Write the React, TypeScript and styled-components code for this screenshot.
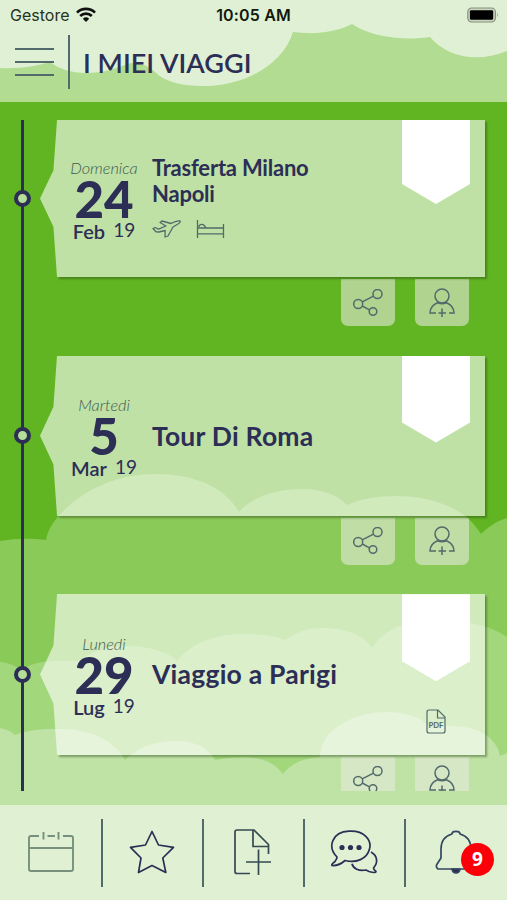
import React from 'react';
import styled, { createGlobalStyle } from 'styled-components';

const ink = '#2c2e55';
const slate = '#526a6b';

const GlobalStyle = createGlobalStyle`
  *, *::before, *::after { box-sizing: border-box; }
  body { margin: 0; background: #62b522; }
`;

const Screen = styled.div`
  position: relative;
  isolation: isolate;
  width: 507px;
  height: 900px;
  overflow: hidden;
  display: flex;
  flex-direction: column;
  background: #62b522;
  color: ${ink};
  font-family: Lato, 'Liberation Sans', sans-serif;
`;

const Backdrop = styled.svg`
  position: absolute;
  inset: 0;
  z-index: -1;
`;

const Header = styled.header`
  flex: none;
  height: 102px;
  display: flex;
  flex-direction: column;
`;

const StatusBar = styled.div`
  height: 30px;
  display: grid;
  grid-template-columns: 1fr auto 1fr;
  align-items: center;
  padding: 0 8px 0 10px;
  font: 400 16px/30px Inter, sans-serif;
  color: #26331f;
`;

const Carrier = styled.div`
  display: flex;
  align-items: center;
  gap: 7px;
  letter-spacing: 0;
`;

const Clock = styled.div`
  margin-left: -2px;
  font-weight: 600;
  color: #111a0c;
  letter-spacing: 0.15px;
`;

const Battery = styled.svg`
  justify-self: end;
`;

const TitleBar = styled.div`
  height: 63px;
  display: flex;
  align-items: center;
  padding-left: 15px;
`;

const MenuButton = styled.div`
  width: 39px;
  height: 28px;
  display: flex;
  flex-direction: column;
  justify-content: space-between;
`;

const MenuLine = styled.span`
  height: 2px;
  background: ${slate};
`;

const TitleRule = styled.span`
  width: 2px;
  height: 54px;
  margin: 0 13px 0 14px;
  background: ${slate};
`;

const PageTitle = styled.h1`
  margin: 2px 0 0;
  font-size: 27px;
  line-height: 32px;
  font-weight: 600;
  letter-spacing: 0.03px;
`;

const TripList = styled.main`
  flex: none;
  height: 671px;
  margin: 18px 0 14px;
  overflow: hidden;
  display: flex;
  flex-direction: column;
  background: linear-gradient(${ink}, ${ink}) 21px 0 / 3px 100% no-repeat;
`;

const TripRow = styled.section<{ $height: number }>`
  flex: none;
  height: ${(p) => p.$height}px;
  display: grid;
  grid-template-columns: 57px 428px;
  grid-template-rows: auto 1fr;
`;

const TimelineCell = styled.div`
  display: flex;
  align-items: center;
  padding-left: 14px;
`;

const Node = styled.span`
  width: 17px;
  height: 17px;
  border: 4px solid ${ink};
  border-radius: 50%;
  background: #b6de98;
`;

const Card = styled.article<{ $height: number }>`
  position: relative;
  height: ${(p) => p.$height}px;
  display: grid;
  grid-template-columns: 95px 1fr 68px;
  column-gap: 0;
  padding-right: 15px;
  background: rgba(255, 255, 255, 0.6);
  box-shadow: 2px 2px 2px rgba(38, 60, 22, 0.42);

  &::before {
    content: '';
    position: absolute;
    left: -17px;
    top: 0;
    width: 17px;
    height: 100%;
    background: rgba(255, 255, 255, 0.6);
    clip-path: polygon(100% 0, 79% 32%, 0 50%, 79% 68%, 100% 100%);
  }
`;

const DateBlock = styled.div`
  width: 94px;
  display: flex;
  flex-direction: column;
  align-items: center;
  align-self: center;
  padding-top: 3px;
`;

const Weekday = styled.div`
  font-size: 16.3px;
  line-height: 18px;
  font-style: italic;
  font-weight: 300;
  color: #3d5b50;
`;

const DayNumber = styled.div`
  font-size: 51px;
  line-height: 44px;
  font-weight: 900;
`;

const MonthYear = styled.div`
  display: flex;
  gap: 8px;
  font-size: 20px;
  line-height: 20px;
  font-weight: 600;
`;

const Year = styled.span`
  font-size: 19px;
  line-height: 18px;
  font-weight: 400;
`;

const Details = styled.div`
  align-self: center;
  display: flex;
  flex-direction: column;
`;

const TripTitle = styled.h2<{ $compact?: boolean }>`
  margin: ${(p) => (p.$compact ? '-3px' : 0)} 0 0;
  max-width: 200px;
  font-size: ${(p) => (p.$compact ? 22 : 26.5)}px;
  line-height: ${(p) => (p.$compact ? 26 : 32)}px;
  font-weight: 700;
  letter-spacing: ${(p) => (p.$compact ? -0.22 : 0.22)}px;
`;

const Amenities = styled.div`
  display: flex;
  gap: 14px;
  height: 20px;
  margin-top: 12px;
`;

const Extras = styled.div`
  display: flex;
  flex-direction: column;
  align-items: center;
  justify-content: space-between;
  padding-bottom: 21px;
`;

const Ribbon = styled.div<{ $height: number }>`
  width: 68px;
  height: ${(p) => p.$height}px;
  background: #fff;
  clip-path: polygon(0 0, 100% 0, 100% calc(100% - 20px), 50% 100%, 0 calc(100% - 20px));
`;

const Actions = styled.div`
  grid-column: 2;
  display: flex;
  justify-content: flex-end;
  gap: 20px;
  padding: 2px 16px 0 0;
`;

const ActionTab = styled.div`
  width: 54px;
  height: 47px;
  display: flex;
  align-items: center;
  justify-content: center;
  border-radius: 0 0 7px 7px;
  background: rgba(228, 233, 219, 0.6);
`;

const BottomNav = styled.nav`
  flex: none;
  height: 95px;
  display: grid;
  grid-template-columns: 101px repeat(3, 101px) 103px;
  align-items: center;
  background: rgba(255, 255, 255, 0.51);
`;

const NavItem = styled.div<{ $last?: boolean }>`
  position: relative;
  height: 68px;
  display: flex;
  align-items: center;
  justify-content: center;
  padding: 0 0 2px ${(p) => (p.$last ? 1 : 0)}px;
  box-shadow: ${(p) => (p.$last ? 'none' : `2px 0 0 ${slate}`)};
`;

const Badge = styled.span`
  position: absolute;
  left: 57px;
  top: 24px;
  width: 33px;
  height: 33px;
  border-radius: 50%;
  background: #fb0009;
  color: #fff;
  font: 700 19px/32px 'Open Sans', sans-serif;
  text-align: center;
`;

const Clouds = () => (
  <Backdrop width="507" height="900" viewBox="0 0 507 900" aria-hidden="true">
    <rect width="507" height="102" fill="#e0f0d5" />
    <path
      fill="#b1dc91"
      d="M0 68C20 69 36 66 50 62C59 69 72 73 85 73C105 73 116 68 131 63Q147 63 155 72C165 82 182 86 203 86C244 86 283 65 293 32C315 35 337 32 352 24C372 37 403 41 430 37C446 56 476 64 507 51V102H0Z"
    />
    <path
      fill="#8aca58"
      d="M0 541Q23 537 46 540C48 530 52 524 57 518C78 493 113 474 155 474C194 474 225 487 239 512C252 497 276 489 302 489C322 489 338 495 347 505C360 499 378 496 396 496C434 496 466 509 481 534Q493 522 507 518V900H0Z"
    />
    <path
      fill="#a3d77c"
      d="M0 662Q13 663 20 670Q37 660 58 661L80 661C91 651 107 646 125 646C149 646 169 652 177 661C191 643 216 634 242 634C260 634 276 636 285 640C296 632 308 628 322 628C344 628 363 634 372 648C382 632 401 621 430 621C461 619 490 625 507 637V900H0Z"
    />
    <path
      fill="#bee3a4"
      d="M0 728Q10 730 15 735C31 729 44 729 60 729C91 729 115 741 125 760C137 748 153 741 175 741C196 741 208 748 215 760C250 754 270 757 283 774C290 764 303 758 320 757C320 731 351 712 387 712C407 712 421 717 431 728C468 721 496 733 500 756L507 753V900H0Z"
    />
  </Backdrop>
);

const WifiIcon = () => (
  <svg width="20" height="16" viewBox="0 0 20 16" fill="none" stroke="#111" strokeWidth="2.7">
    <path d="M1 5.6C6 .7 14 .7 19 5.6M4.2 9C7.5 5.8 12.5 5.8 15.8 9" />
    <path d="M10 15 6.8 11.7Q10 9 13.2 11.7Z" fill="#111" stroke="none" />
  </svg>
);

const BatteryIcon = () => (
  <Battery width="32" height="16" viewBox="0 0 33 16">
    <rect x=".8" y=".8" width="28.5" height="14.4" rx="4" fill="#c8d6bd" stroke="#87927e" strokeWidth="1.2" />
    <rect x="3" y="3" width="24" height="10" rx="1.5" fill="#000" />
    <path d="M31 5.5Q32.5 8 31 10.5Z" fill="#87927e" />
  </Battery>
);

const PlaneIcon = () => (
  <svg width="30" height="20" viewBox="0 0 30 20" fill="none" stroke={slate} strokeWidth="1.3" strokeLinejoin="round">
    <path d="M1 9.5 3 8.5 6.5 10.2 14 7 8 3.5 10 2 19 4.5C22 2.8 25 1.5 28 2Q29 3 26 5L21 8 16 17 13 18 13.2 11.5 7 13 4 12.8Z" />
  </svg>
);

const BedIcon = () => (
  <svg width="29" height="20" viewBox="0 0 29 20" fill="none" stroke={slate} strokeWidth="1.3">
    <path d="M1.5 1V19M27.5 5V19M1.5 9H27.5M1.5 14.8H27.5M3 8C3 5 8 4 9.5 8.5" />
  </svg>
);

const PdfIcon = () => (
  <svg width="20" height="25" viewBox="0 0 20 25" fill="none" stroke={slate} strokeWidth="1.2">
    <path d="M12 1H3Q1 1 1 3V22Q1 24 3 24H17Q19 24 19 22V8Z M11.5 1V9H19" />
    <text x="10" y="19" textAnchor="middle" fill={slate} stroke="none" fontFamily="Lato, sans-serif" fontWeight="700" fontSize="7.6">
      PDF
    </text>
  </svg>
);

const ShareIcon = () => (
  <svg width="30" height="28" viewBox="0 0 30 28" fill="none" stroke={slate} strokeWidth="1.5">
    <circle cx="5.2" cy="15" r="4.5" />
    <circle cx="24.5" cy="5" r="4.5" />
    <circle cx="20" cy="22.5" r="3.8" />
    <path d="M9.2 12.9 20.5 7.1M9.2 17 16.5 20.8" />
  </svg>
);

const AddPersonIcon = () => (
  <svg width="26" height="30" viewBox="0 0 26 30" fill="none" stroke={slate} strokeWidth="1.5">
    <circle cx="13" cy="8" r="7" />
    <path d="M7 25H1Q1 18 8.5 14.8Q13 16.5 17.5 14.8Q25 18 25 25H20M9.5 25H17M13 20.5V29" />
  </svg>
);

const CalendarIcon = () => (
  <svg width="46" height="42" viewBox="0 0 46 42" fill="none" stroke="#78907b" strokeWidth="1.9">
    <path d="M11 5H3Q1 5 1 7V38Q1 40 3 40H43Q45 40 45 38V7Q45 5 43 5H35M19.5 5H27M15.5 1V8.5M30.5 1V8.5M1 17H45" />
  </svg>
);

const StarIcon = () => (
  <svg width="46" height="44" viewBox="0 0 46 44" fill="none" stroke={ink} strokeWidth="1.7" strokeLinejoin="round">
    <path d="M23 1.5 29.5 15 44.5 17.3 33.8 28 36.8 42.5 23 35.5 9.5 42.5 12 28 1.5 17.3 16.5 15Z" />
  </svg>
);

const AddDocumentIcon = () => (
  <svg width="38" height="46" viewBox="0 0 38 46" fill="none" stroke="#344951" strokeWidth="1.7">
    <path d="M16 44.5H3Q1 44.5 1 42.5V3Q1 1 3 1H20L34.5 15.5V25M19 1V17.5H34.5M24.5 20.5V46M12 33H37" />
  </svg>
);

const ChatIcon = () => (
  <svg width="48" height="44" viewBox="0 0 48 44" fill="none" stroke={ink} strokeWidth="1.7" strokeLinejoin="round">
    <path d="M7 27C-3 17 2 2 19 1.2C34 .2 42 10 39.5 19C37 29 26 33.5 15 30.5Q9 36 2 35.5Q1 34.5 5 31.5Q7 29 7 27Z" />
    <path d="M41 22C48 26 48 33 43.5 38Q43.5 39.5 46 41.5Q46 43.5 39 41.5L36 40C29 41.5 23 38.5 22 33.8" />
    <g fill={ink} stroke="none">
      <circle cx="12" cy="17.5" r="2.6" />
      <circle cx="20.5" cy="17.5" r="2.6" />
      <circle cx="29" cy="17.5" r="2.6" />
    </g>
  </svg>
);

const BellIcon = () => (
  <svg width="42" height="44" viewBox="0 0 42 44" fill="none" stroke="#344660" strokeWidth="1.7" strokeLinejoin="round">
    <path d="M17 4C17 .5 25 .5 25 4C32 6 36 11 36 19V28L41 35V39H3Q1 38 1.5 35L6 28V19C6 11 10 6 17 4Z" />
    <path d="M17 39H25Q24.5 43 21 43Q17.5 43 17 39Z" fill={ink} />
  </svg>
);

interface Trip {
  weekday: string;
  day: string;
  month: string;
  title: string;
  rowHeight: number;
  cardHeight: number;
  compact?: boolean;
  pdf?: boolean;
}

const trips: Trip[] = [
  { weekday: 'Domenica', day: '24', month: 'Feb', title: 'Trasferta Milano Napoli', rowHeight: 235.5, cardHeight: 157, compact: true },
  { weekday: 'Martedi', day: '5', month: 'Mar', title: 'Tour Di Roma', rowHeight: 238.7, cardHeight: 160.3 },
  { weekday: 'Lunedi', day: '29', month: 'Lug', title: 'Viaggio a Parigi', rowHeight: 239, cardHeight: 160.6, pdf: true },
];

const TripEntry = ({ trip }: { trip: Trip }) => (
  <TripRow $height={trip.rowHeight}>
    <TimelineCell>
      <Node />
    </TimelineCell>
    <Card $height={trip.cardHeight}>
      <DateBlock>
        <Weekday>{trip.weekday}</Weekday>
        <DayNumber>{trip.day}</DayNumber>
        <MonthYear>
          {trip.month}
          <Year>19</Year>
        </MonthYear>
      </DateBlock>
      <Details>
        <TripTitle $compact={trip.compact}>{trip.title}</TripTitle>
        {trip.compact && (
          <Amenities>
            <PlaneIcon />
            <BedIcon />
          </Amenities>
        )}
      </Details>
      <Extras>
        <Ribbon $height={trip.compact ? 84 : 87} />
        {trip.pdf && <PdfIcon />}
      </Extras>
    </Card>
    <Actions>
      <ActionTab>
        <ShareIcon />
      </ActionTab>
      <ActionTab>
        <AddPersonIcon />
      </ActionTab>
    </Actions>
  </TripRow>
);

export default function App() {
  return (
    <>
      <GlobalStyle />
      <Screen>
        <Clouds />
        <Header>
          <StatusBar>
            <Carrier>
              Gestore
              <WifiIcon />
            </Carrier>
            <Clock>10:05 AM</Clock>
            <BatteryIcon />
          </StatusBar>
          <TitleBar>
            <MenuButton>
              <MenuLine />
              <MenuLine />
              <MenuLine />
            </MenuButton>
            <TitleRule />
            <PageTitle>I MIEI VIAGGI</PageTitle>
          </TitleBar>
        </Header>
        <TripList>
          {trips.map((trip) => (
            <TripEntry key={trip.title} trip={trip} />
          ))}
        </TripList>
        <BottomNav>
          <NavItem>
            <CalendarIcon />
          </NavItem>
          <NavItem>
            <StarIcon />
          </NavItem>
          <NavItem>
            <AddDocumentIcon />
          </NavItem>
          <NavItem>
            <ChatIcon />
          </NavItem>
          <NavItem $last>
            <BellIcon />
            <Badge>9</Badge>
          </NavItem>
        </BottomNav>
      </Screen>
    </>
  );
}
